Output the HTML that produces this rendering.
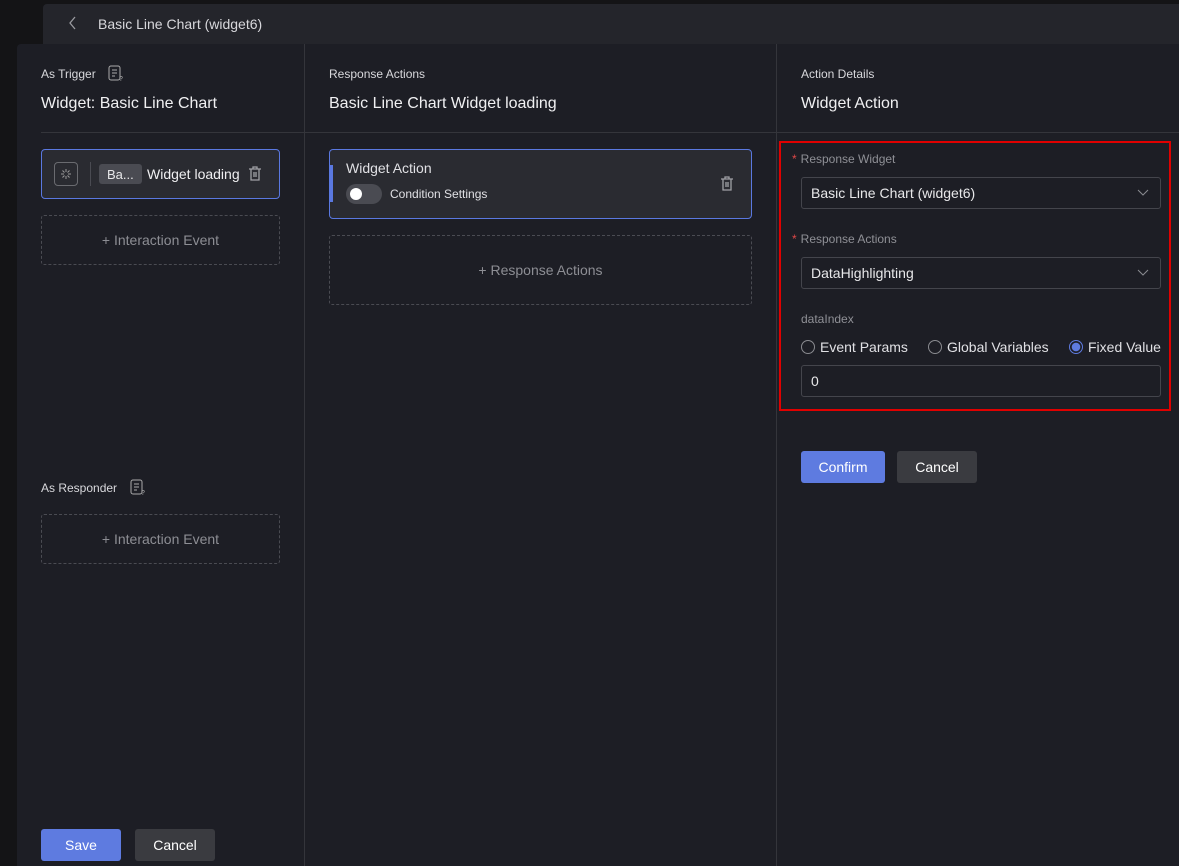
<!DOCTYPE html><html><head><style>
*{box-sizing:border-box;margin:0;padding:0}
body{width:1179px;height:866px;overflow:hidden;background:#141416;font-family:"Liberation Sans",sans-serif;position:relative;color:#e6e6ea}
.a{position:absolute}
.top{left:43px;top:4px;width:1136px;height:40px;background:#24252b;border-radius:4px 0 0 0}
.panel{left:17px;top:44px;width:1162px;height:822px;background:#1d1e25;border-radius:4px 0 0 0}
.vl{width:1px;background:#34353b;top:44px;height:822px}
.sm{font-size:12px;color:#d8d8dc}
.h{font-size:16px;color:#f0f0f2}
.card{background:#2a2b31;border:1px solid #5a78e0;border-radius:4px}
.dash{border:1px dashed #4a4b52;border-radius:3px;color:#8d8e94;font-size:14px;display:flex;align-items:center;justify-content:center}
.lbl{font-size:12px;color:#8f9096}
.star{color:#e04848;margin-right:4px}
.inp{border:1px solid #44454c;border-radius:3px;background:#1d1e25;font-size:14px;color:#e8e8ea;padding-left:9px;display:flex;align-items:center}
.btn{border-radius:3px;font-size:14px;display:flex;align-items:center;justify-content:center;color:#fff}
.rad{width:14px;height:14px;border:1px solid #8a8b90;border-radius:50%;display:inline-block;vertical-align:-2px;margin-right:5px}
</style></head><body>
<div class="a top"></div>
<svg class="a" style="left:68px;top:16px" width="10" height="14"><path d="M7 1L2 7l5 6" stroke="#9a9ba0" fill="none" stroke-width="1.3"/></svg>
<div class="a" style="left:98px;top:16px;font-size:14px;color:#d8d8dc">Basic Line Chart (widget6)</div>
<div class="a panel"></div>
<div class="a vl" style="left:304px"></div>
<div class="a vl" style="left:776px"></div>
<div class="a" style="left:41px;top:132px;width:1138px;height:1px;background:#34353b"></div>

<div class="a sm" style="left:41px;top:67px">As Trigger</div>
<svg class="a" style="left:108px;top:65px" width="16" height="17"><rect x="1" y="1" width="11" height="14" rx="2" stroke="#aaa" fill="none"/><path d="M4 5h5M4 8h5M4 11h3" stroke="#aaa"/><text x="11" y="16" font-size="7" fill="#aaa" font-family="Liberation Sans">?</text></svg>
<div class="a h" style="left:41px;top:95px">Widget: Basic Line Chart</div>
<div class="a card" style="left:41px;top:149px;width:239px;height:50px"></div>
<div class="a" style="left:54px;top:162px;width:24px;height:24px;border:1px solid #6a6b70;border-radius:4px"></div>
<svg class="a" style="left:59px;top:167px" width="14" height="14"><g stroke="#999" stroke-width="1"><path d="M7 2v3M7 9v3M2 7h3M9 7h3M3.5 3.5l2 2M8.5 8.5l2 2M10.5 3.5l-2 2M5.5 8.5l-2 2"/></g></svg>
<div class="a" style="left:90px;top:162px;width:1px;height:24px;background:#4a4b52"></div>
<div class="a" style="left:99px;top:164px;width:43px;height:20px;background:#4a4b52;border-radius:3px;font-size:13px;color:#e8e8ea;padding:3px 0 0 8px">Ba...</div>
<div class="a" style="left:147px;top:166px;font-size:14px;color:#f0f0f2">Widget loading</div>
<svg class="a" style="left:248px;top:166px" width="14" height="16"><path d="M1 3h12M5 3V1h4v2M3 3v11h8V3M6 6v5M8 6v5" stroke="#a0a1a6" fill="none" stroke-width="1.3"/></svg>
<div class="a dash" style="left:41px;top:215px;width:239px;height:50px">+ Interaction Event</div>
<div class="a sm" style="left:41px;top:481px">As Responder</div>
<svg class="a" style="left:130px;top:479px" width="16" height="17"><rect x="1" y="1" width="11" height="14" rx="2" stroke="#aaa" fill="none"/><path d="M4 5h5M4 8h5M4 11h3" stroke="#aaa"/><text x="11" y="16" font-size="7" fill="#aaa" font-family="Liberation Sans">?</text></svg>
<div class="a dash" style="left:41px;top:514px;width:239px;height:50px">+ Interaction Event</div>
<div class="a btn" style="left:41px;top:829px;width:80px;height:32px;background:#5e7be0">Save</div>
<div class="a btn" style="left:135px;top:829px;width:80px;height:32px;background:#3a3b40">Cancel</div>

<div class="a sm" style="left:329px;top:67px">Response Actions</div>
<div class="a h" style="left:329px;top:95px">Basic Line Chart Widget loading</div>
<div class="a card" style="left:329px;top:149px;width:423px;height:70px"></div>
<div class="a" style="left:329px;top:165px;width:4px;height:37px;background:#5a78e0"></div>
<div class="a" style="left:346px;top:160px;font-size:14px;color:#e0e0e4">Widget Action</div>
<div class="a" style="left:346px;top:184px;width:36px;height:20px;background:#4a4b52;border-radius:10px"></div>
<div class="a" style="left:350px;top:188px;width:12px;height:12px;background:#fff;border-radius:50%"></div>
<div class="a" style="left:390px;top:187px;font-size:12px;color:#e0e0e4">Condition Settings</div>
<svg class="a" style="left:720px;top:176px" width="14" height="16"><path d="M1 3h12M5 3V1h4v2M3 3v11h8V3M6 6v5M8 6v5" stroke="#a0a1a6" fill="none" stroke-width="1.3"/></svg>
<div class="a dash" style="left:329px;top:235px;width:423px;height:70px">+ Response Actions</div>

<div class="a sm" style="left:801px;top:67px">Action Details</div>
<div class="a h" style="left:801px;top:95px">Widget Action</div>
<div class="a" style="left:779px;top:141px;width:392px;height:270px;border:2px solid #e00000"></div>
<div class="a lbl" style="left:792px;top:152px"><span class="star">*</span>Response Widget</div>
<div class="a inp" style="left:801px;top:177px;width:360px;height:32px">Basic Line Chart (widget6)</div>
<svg class="a" style="left:1137px;top:189px" width="12" height="8"><path d="M1 1l5 5 5-5" stroke="#8a8b90" fill="none"/></svg>
<div class="a lbl" style="left:792px;top:232px"><span class="star">*</span>Response Actions</div>
<div class="a inp" style="left:801px;top:257px;width:360px;height:32px">DataHighlighting</div>
<svg class="a" style="left:1137px;top:269px" width="12" height="8"><path d="M1 1l5 5 5-5" stroke="#8a8b90" fill="none"/></svg>
<div class="a lbl" style="left:801px;top:312px">dataIndex</div>
<div class="a" style="left:801px;top:339px;font-size:14px;color:#e0e0e4"><span class="rad"></span>Event Params</div>
<div class="a" style="left:928px;top:339px;font-size:14px;color:#e0e0e4"><span class="rad"></span>Global Variables</div>
<div class="a" style="left:1069px;top:339px;font-size:14px;color:#e0e0e4"><span class="rad" style="border-color:#5e7be0;background:radial-gradient(circle,#5e7be0 0 4px,transparent 4.5px)"></span>Fixed Value</div>
<div class="a inp" style="left:801px;top:365px;width:360px;height:32px">0</div>
<div class="a btn" style="left:801px;top:451px;width:84px;height:32px;background:#5e7be0">Confirm</div>
<div class="a btn" style="left:897px;top:451px;width:80px;height:32px;background:#3a3b40">Cancel</div>
</body></html>
